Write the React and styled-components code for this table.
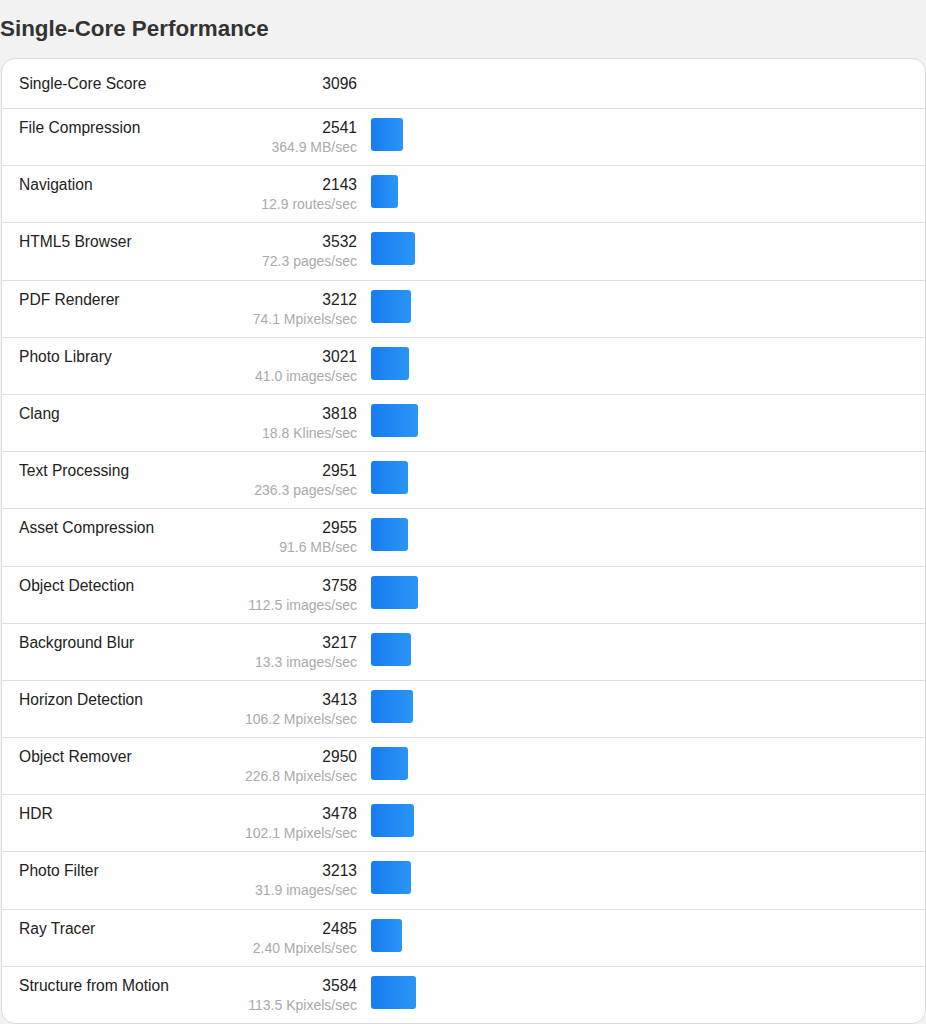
import React from 'react';
import styled, { createGlobalStyle } from 'styled-components';

const GlobalStyle = createGlobalStyle`
  html, body {
    margin: 0;
    padding: 0;
    background: #f2f2f2;
    font-family: "Liberation Sans", Arial, sans-serif;
    color: #222;
  }
`;

const Page = styled.div`
  padding: 15px 0 2px 0;
`;

const Title = styled.h2`
  margin: 0 0 15px 0;
  font-size: 22.4px;
  font-weight: bold;
  line-height: 28px;
  color: #333;
`;

const Card = styled.div`
  margin-left: 1px;
  background: #fefefe;
  border: 1px solid #dcdcdc;
  border-radius: 14px;
  overflow: hidden;
`;

const Row = styled.div`
  display: grid;
  grid-template-columns: 200px 138px 1fr;
  align-items: start;
  padding: ${(p) => (p.$head ? '15px 0 15px 17px' : '9px 0 9.2px 17px')};
  border-top: ${(p) => (p.$head ? 'none' : '1px solid #dedede')};
`;

const Label = styled.div`
  font-size: 15.6px;
  line-height: 19px;
  color: #222;
`;

const Score = styled.div`
  text-align: right;
  font-size: 15.6px;
  line-height: 19px;
  color: #222;
`;

const Rate = styled.div`
  font-size: 14px;
  line-height: 17px;
  margin-top: 2px;
  color: #aaa;
`;

const BarCell = styled.div`
  padding: 0 0 0 14px;
`;

const Bar = styled.div`
  height: 33px;
  border-radius: 3px;
  background: linear-gradient(to right, #177cf0, #2a95f6);
`;

const rows = [
  { name: 'File Compression', score: 2541, rate: '364.9 MB/sec' },
  { name: 'Navigation', score: 2143, rate: '12.9 routes/sec' },
  { name: 'HTML5 Browser', score: 3532, rate: '72.3 pages/sec' },
  { name: 'PDF Renderer', score: 3212, rate: '74.1 Mpixels/sec' },
  { name: 'Photo Library', score: 3021, rate: '41.0 images/sec' },
  { name: 'Clang', score: 3818, rate: '18.8 Klines/sec' },
  { name: 'Text Processing', score: 2951, rate: '236.3 pages/sec' },
  { name: 'Asset Compression', score: 2955, rate: '91.6 MB/sec' },
  { name: 'Object Detection', score: 3758, rate: '112.5 images/sec' },
  { name: 'Background Blur', score: 3217, rate: '13.3 images/sec' },
  { name: 'Horizon Detection', score: 3413, rate: '106.2 Mpixels/sec' },
  { name: 'Object Remover', score: 2950, rate: '226.8 Mpixels/sec' },
  { name: 'HDR', score: 3478, rate: '102.1 Mpixels/sec' },
  { name: 'Photo Filter', score: 3213, rate: '31.9 images/sec' },
  { name: 'Ray Tracer', score: 2485, rate: '2.40 Mpixels/sec' },
  { name: 'Structure from Motion', score: 3584, rate: '113.5 Kpixels/sec' },
];

const App = () => {
  return (
    <Page>
      <GlobalStyle />
      <Title>Single-Core Performance</Title>
      <Card>
        <Row $head>
          <Label>Single-Core Score</Label>
          <Score>3096</Score>
          <BarCell />
        </Row>
        {rows.map((r) => (
          <Row key={r.name}>
            <Label>{r.name}</Label>
            <Score>
              {r.score}
              <Rate>{r.rate}</Rate>
            </Score>
            <BarCell>
              {/* bar width scales with score */}
              <Bar style={{ width: Math.round(r.score / 80.5) }} />
            </BarCell>
          </Row>
        ))}
      </Card>
    </Page>
  );
};

export default App;
